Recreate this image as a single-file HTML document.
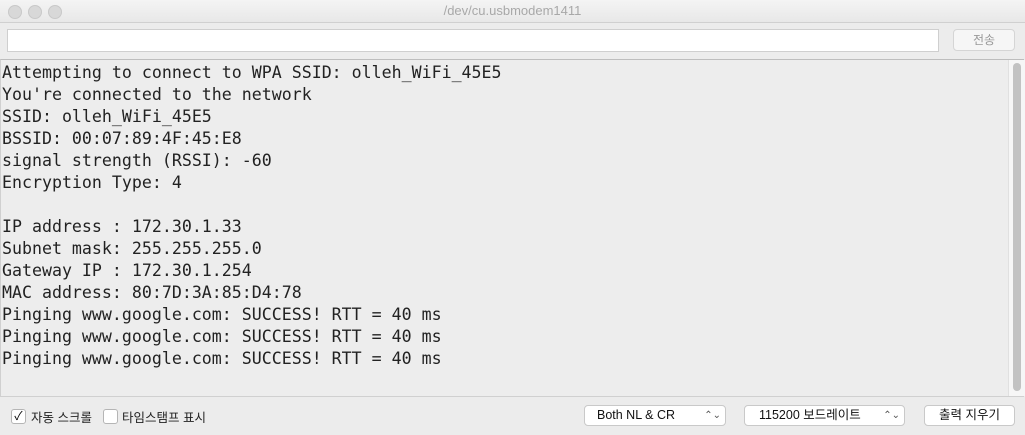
<!DOCTYPE html><html><head><meta charset="utf-8"><style>
body{margin:0;width:1025px;height:435px;overflow:hidden;background:#ececec;font-family:"Liberation Sans","Noto Sans CJK KR",sans-serif;position:relative}
.title{position:absolute;left:0;top:0;width:1025px;height:22px;background:linear-gradient(#f4f4f4,#e8e8e8);border-bottom:1px solid #d0d0d0;text-align:center;font-size:13px;line-height:22px;color:#a8a8a8}
.dot{position:absolute;top:5px;width:12px;height:12px;border-radius:50%;background:#d8d8d8;border:0.5px solid #c8c8c8}
.inp{position:absolute;left:7px;top:29px;width:930px;height:21px;background:#fff;border:1px solid #cfcfcf}
.send{position:absolute;left:953px;top:29px;width:60px;height:20px;border:1px solid #d5d5d5;border-radius:4px;background:#f6f6f6;color:#999;font-size:12px;text-align:center;line-height:20px}
.out{position:absolute;left:0;top:59px;width:1023px;height:336px;background:#ededed;border-top:1px solid #bdbdbd;border-bottom:1px solid #d0d0d0;border-left:1px solid #d0d0d0}
pre{margin:0;position:absolute;left:1px;top:2px;font-family:"DejaVu Sans Mono",monospace;font-size:16.6px;line-height:22px;color:#222}
.sb{position:absolute;left:1007px;top:0;width:16px;height:336px;background:#f6f6f6;border-left:1px solid #e0e0e0}
.th{position:absolute;left:4px;top:3px;width:8px;height:328px;border-radius:4px;background:#c2c2c2}
.cb{position:absolute;top:409px;width:13px;height:13px;border:1px solid #b5b5b5;border-radius:3px;background:#fff;font-size:12px;line-height:13px;text-align:center}
.lbl{position:absolute;top:407px;font-size:12.5px;color:#222}
.sel{position:absolute;top:405px;height:19px;border:1px solid #c9c9c9;border-radius:4px;background:#fff;font-size:12.5px;line-height:19px;color:#111}
.sel span{position:absolute;right:4px;top:0;font-size:10px;color:#555}
</style></head><body>
<div class="title">/dev/cu.usbmodem1411</div>
<div class="dot" style="left:8px"></div><div class="dot" style="left:28px"></div><div class="dot" style="left:48px"></div>
<div class="inp"></div><div class="send">전송</div>
<div class="out"><pre>Attempting to connect to WPA SSID: olleh_WiFi_45E5
You're connected to the network
SSID: olleh_WiFi_45E5
BSSID: 00:07:89:4F:45:E8
signal strength (RSSI): -60
Encryption Type: 4

IP address : 172.30.1.33
Subnet mask: 255.255.255.0
Gateway IP : 172.30.1.254
MAC address: 80:7D:3A:85:D4:78
Pinging www.google.com: SUCCESS! RTT = 40 ms
Pinging www.google.com: SUCCESS! RTT = 40 ms
Pinging www.google.com: SUCCESS! RTT = 40 ms</pre><div class="sb"><div class="th"></div></div></div>
<div class="cb" style="left:11px">✓</div><div class="lbl" style="left:31px">자동 스크롤</div>
<div class="cb" style="left:103px"></div><div class="lbl" style="left:122px">타임스탬프 표시</div>
<div class="sel" style="left:584px;width:140px"><b style="font-weight:normal;margin-left:12px">Both NL &amp; CR</b><span>⌃⌄</span></div>
<div class="sel" style="left:744px;width:159px"><b style="font-weight:normal;margin-left:14px">115200 보드레이트</b><span>⌃⌄</span></div>
<div class="sel" style="left:924px;width:89px;text-align:center">출력 지우기</div>
</body></html>
